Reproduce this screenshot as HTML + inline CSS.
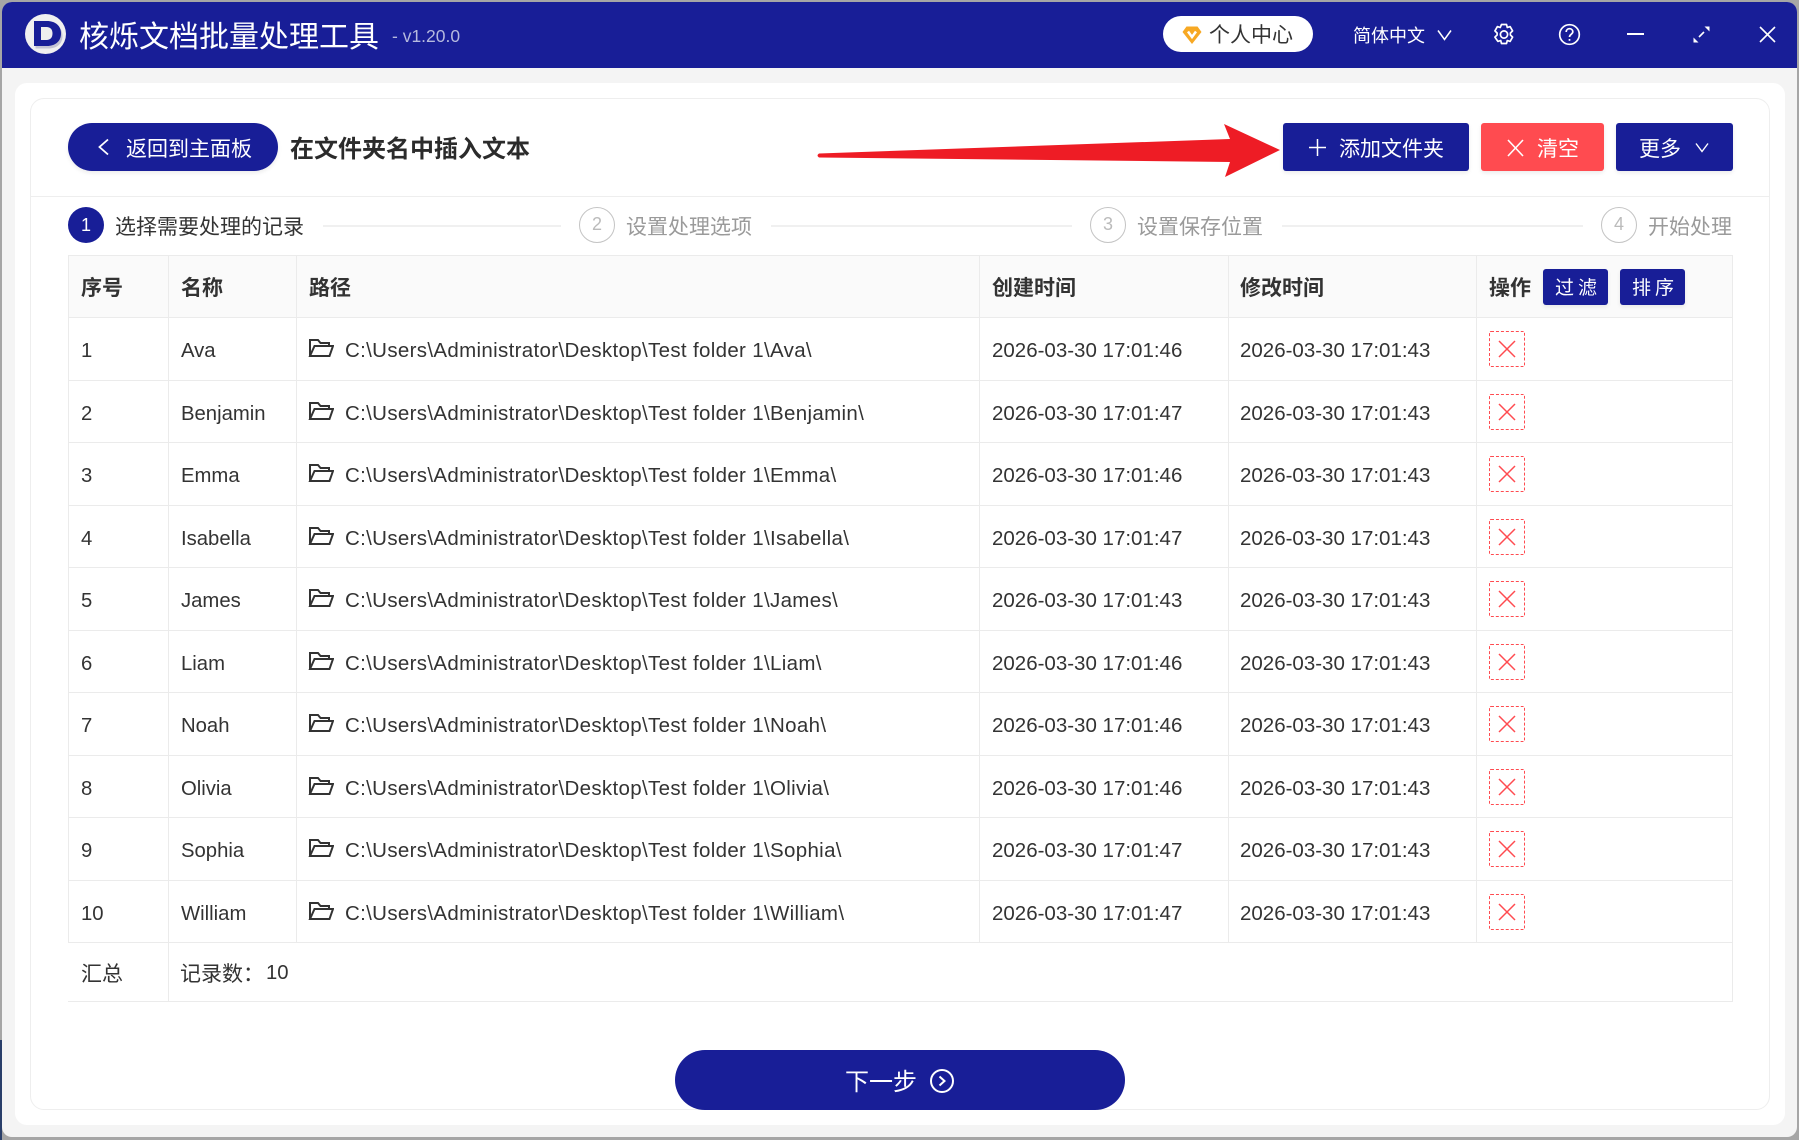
<!DOCTYPE html>
<html lang="zh"><head><meta charset="utf-8"><title>核烁文档批量处理工具</title>
<style>
html,body{margin:0;padding:0;width:1799px;height:1140px;overflow:hidden;background:#a6a6a6}
body{position:relative;font-family:"Liberation Sans","Noto Sans CJK SC",sans-serif;color:#333}
div,span,svg{position:absolute;box-sizing:border-box}
.t{white-space:nowrap;line-height:30px;height:30px;font-size:21px}
.c{font-family:"Noto Sans CJK SC","Liberation Sans",sans-serif}
.b{font-weight:700}
.w{color:#fff}
.g{color:#9a9a9a}
.p{font-size:20.5px;letter-spacing:.33px;margin:2px 0 0 1px}
.d{font-size:20.5px;margin-top:2px}
.n{font-size:20.3px;margin-top:2px}
.btn{background:#181e97;border-radius:3px;box-shadow:0 2px 4px rgba(0,0,0,.08)}
.h{left:68px;width:1665px;height:1px;background:#ebebeb}
.v{width:1px;background:#ebebeb}
.x{left:1489px;width:36px;height:36px;border:1px dashed #ff4b50;border-radius:2px}
.st{width:36px;height:36px;border:1.5px solid #c4c4c4;border-radius:50%;top:207px;text-align:center;line-height:33px;font-size:18px;color:#bbb}
.ln{height:2px;top:225px;background:#f0f0f0}
</style></head><body>
<div style="left:0;top:1040px;width:2px;height:100px;background:#2a3f6a"></div>
<div style="left:2px;top:2px;width:1795px;height:1135px;background:#f4f4f4;border-radius:10px;overflow:hidden">
  <div style="left:0;top:0;width:1795px;height:66px;background:#181e97"></div>
</div>

<!-- logo -->
<div style="left:25px;top:14px;width:41px;height:40px;border-radius:50%;background:#f0f0f0"></div>
<svg style="left:25px;top:14px" width="41" height="40" viewBox="0 0 41 40"><path d="M9 8h13c8 0 14 4.500 14 12.500S30 33 22 33H9z" fill="#c4c4d4" transform="translate(1.500,1.500)"/><path d="M9 7h13c8 0 14 4.500 14 12.500S30 32 22 32H9z" fill="#181e97"/><path d="M16 13h5.500c3.800 0 6 2.500 6 6.500s-2.200 6.500-6 6.500H16z" fill="#eee"/></svg>
<div class="t c w" style="left:79px;top:19px;font-size:30px;line-height:30px">核烁文档批量处理工具</div>
<div class="t" style="left:392px;top:21px;font-size:17.5px;color:#b6bade">- v1.20.0</div>

<!-- top right -->
<div style="left:1163px;top:16px;width:150px;height:36px;border-radius:18px;background:#fff"></div>
<svg style="left:1182px;top:25px" width="20" height="20" viewBox="0 0 20 20"><path d="M4.500 1.500h11L19.500 7 10 19 .5 7z" fill="#f7a823"/><path d="M6 6.500l4 5.500 4-5.500" fill="none" stroke="#fff" stroke-width="2.500"/></svg>
<div class="t c" style="left:1209px;top:19px">个人中心</div>
<div class="t c w" style="left:1353px;top:20px;font-size:18px">简体中文</div>
<svg style="left:1437px;top:29px" width="15" height="12" viewBox="0 0 15 12"><path d="M1 1.500l6.500 9 6.500-9" fill="none" stroke="#fff" stroke-width="1.500"/></svg>
<svg style="left:1493px;top:23px" width="22" height="23" viewBox="0 0 22 23" fill="none" stroke="#fff" stroke-width="1.700" stroke-linejoin="round"><path d="M8.500 1.500h5l.8 3 2.800-.9 2.500 4.300-2.200 2.100v2l2.200 2.100-2.500 4.300-2.800-.9-.8 3h-5l-.8-3-2.800.9L1.900 14.100 4.100 12v-2L1.900 7.900l2.500-4.300 2.800.9z"/><circle cx="11" cy="11.500" r="3.600"/></svg>
<svg style="left:1558px;top:23px" width="23" height="23" viewBox="0 0 23 23" fill="none" stroke="#fff" stroke-width="1.700"><circle cx="11.500" cy="11.500" r="9.800"/><path d="M8.200 9c0-2 1.500-3.300 3.300-3.300s3.300 1.300 3.300 3.100c0 2.500-3.300 2.600-3.300 5.200"/><path d="M11.500 16v1.800"/></svg>
<div style="left:1627px;top:33px;width:17px;height:2px;background:#fff"></div>
<svg style="left:1692px;top:25px" width="19" height="19" viewBox="0 0 19 19" fill="none" stroke="#fff" stroke-width="1.600"><path d="M12 7L7 12"/><path d="M12.500 1.500h5v5z" fill="#fff" stroke="none"/><path d="M1.500 12.500v5h5z" fill="#fff" stroke="none"/></svg>
<svg style="left:1759px;top:26px" width="17" height="17" viewBox="0 0 17 17"><path d="M1 1l15 15M16 1L1 16" stroke="#fff" stroke-width="1.600"/></svg>

<!-- panel -->
<div style="left:15px;top:83px;width:1770px;height:1042px;background:#fff;border-radius:12px"></div>
<div style="left:30px;top:98px;width:1740px;height:1012px;background:#fff;border:1px solid #eee;border-radius:14px"></div>
<div style="left:31px;top:196px;width:1738px;height:1px;background:#eee"></div>

<!-- toolbar -->
<div class="btn" style="left:68px;top:123px;width:210px;height:48px;border-radius:24px"></div>
<svg style="left:97px;top:138px" width="13" height="18" viewBox="0 0 13 18"><path d="M11 1.500L2.500 9l8.500 7.500" fill="none" stroke="#fff" stroke-width="1.800"/></svg>
<div class="t c w" style="left:126px;top:133px">返回到主面板</div>
<div class="t c b" style="left:290px;top:132px;font-size:24px;color:#2b2b2b">在文件夹名中插入文本</div>

<svg style="left:800px;top:110px" width="490" height="75" viewBox="0 0 490 75"><path d="M19 43.500L430 29 424 14 480 40 425 67 430 52 19 47.500Q16 45.500 19 43.500z" fill="#ee1c25"/></svg>

<div class="btn" style="left:1283px;top:123px;width:186px;height:48px"></div>
<svg style="left:1308px;top:138px" width="19" height="19" viewBox="0 0 19 19"><path d="M9.500 1v17M1 9.500h17" stroke="#fff" stroke-width="1.500"/></svg>
<div class="t c w" style="left:1339px;top:133px">添加文件夹</div>
<div class="btn" style="left:1481px;top:123px;width:123px;height:48px;background:#ff4b50"></div>
<svg style="left:1506px;top:139px" width="19" height="18" viewBox="0 0 19 18"><path d="M2 1l15 16M17 1L2 17" stroke="#fff" stroke-width="1.600"/></svg>
<div class="t c w" style="left:1537px;top:133px">清空</div>
<div class="btn" style="left:1616px;top:123px;width:117px;height:48px"></div>
<div class="t c w" style="left:1639px;top:133px">更多</div>
<svg style="left:1695px;top:142px" width="14" height="11" viewBox="0 0 14 11"><path d="M1 1.500l6 8 6-8" fill="none" stroke="#fff" stroke-width="1.400"/></svg>

<!-- steps -->
<div style="left:68px;top:207px;width:36px;height:36px;border-radius:50%;background:#181e97;color:#fff;text-align:center;line-height:36px;font-size:18px">1</div>
<div class="t c" style="left:115px;top:211px">选择需要处理的记录</div>
<div class="ln" style="left:323px;width:238px"></div>
<div class="st" style="left:579px">2</div>
<div class="t c g" style="left:626px;top:211px">设置处理选项</div>
<div class="ln" style="left:771px;width:301px"></div>
<div class="st" style="left:1090px">3</div>
<div class="t c g" style="left:1137px;top:211px">设置保存位置</div>
<div class="ln" style="left:1282px;width:301px"></div>
<div class="st" style="left:1601px">4</div>
<div class="t c g" style="left:1648px;top:211px">开始处理</div>

<!-- table -->
<div style="left:68px;top:255px;width:1665px;height:62px;background:#fafafa"></div>
<div class="h" style="top:255px"></div>
<div class="h" style="top:317px"></div>
<div class="h" style="top:380px"></div>
<div class="h" style="top:442px"></div>
<div class="h" style="top:505px"></div>
<div class="h" style="top:567px"></div>
<div class="h" style="top:630px"></div>
<div class="h" style="top:692px"></div>
<div class="h" style="top:755px"></div>
<div class="h" style="top:817px"></div>
<div class="h" style="top:880px"></div>
<div class="h" style="top:942px"></div>
<div class="h" style="top:1001px"></div>
<div class="v" style="left:68px;top:255px;height:687px"></div>
<div class="v" style="left:168px;top:255px;height:746px"></div>
<div class="v" style="left:296px;top:255px;height:687px"></div>
<div class="v" style="left:979px;top:255px;height:687px"></div>
<div class="v" style="left:1228px;top:255px;height:687px"></div>
<div class="v" style="left:1476px;top:255px;height:687px"></div>
<div class="v" style="left:1732px;top:255px;height:746px"></div>

<div class="t c b" style="left:81px;top:272px">序号</div>
<div class="t c b" style="left:181px;top:272px">名称</div>
<div class="t c b" style="left:309px;top:272px">路径</div>
<div class="t c b" style="left:992px;top:272px">创建时间</div>
<div class="t c b" style="left:1240px;top:272px">修改时间</div>
<div class="t c b" style="left:1489px;top:272px">操作</div>
<div class="btn" style="left:1543px;top:269px;width:65px;height:36px"></div>
<div class="t c w" style="left:1555px;top:272px;font-size:19px;letter-spacing:4px">过滤</div>
<div class="btn" style="left:1620px;top:269px;width:65px;height:36px"></div>
<div class="t c w" style="left:1632px;top:272px;font-size:19px;letter-spacing:4px">排序</div>

<!-- rows -->
<div class="t n" style="left:81px;top:334px">1</div><div class="t n" style="left:181px;top:334px">Ava</div><svg style="left:308px;top:338px" width="26" height="20" viewBox="0 0 26 20"><path d="M2 18V2h8l2.500 3H21v3M2 18h19.500L25 8H6.500z" fill="none" stroke="#333" stroke-width="2"/></svg><div class="t p" style="left:344px;top:334px">C:\Users\Administrator\Desktop\Test folder 1\Ava\</div><div class="t d" style="left:992px;top:334px">2026-03-30 17:01:46</div><div class="t d" style="left:1240px;top:334px">2026-03-30 17:01:43</div><div class="x" style="top:331px"></div><svg style="left:1498px;top:340px" width="18" height="18" viewBox="0 0 18 18"><path d="M1 1l16 16M17 1L1 17" stroke="#ff4b50" stroke-width="1.500"/></svg>

<div class="t n" style="left:81px;top:397px">2</div><div class="t n" style="left:181px;top:397px">Benjamin</div><svg style="left:308px;top:401px" width="26" height="20" viewBox="0 0 26 20"><path d="M2 18V2h8l2.500 3H21v3M2 18h19.500L25 8H6.500z" fill="none" stroke="#333" stroke-width="2"/></svg><div class="t p" style="left:344px;top:397px">C:\Users\Administrator\Desktop\Test folder 1\Benjamin\</div><div class="t d" style="left:992px;top:397px">2026-03-30 17:01:47</div><div class="t d" style="left:1240px;top:397px">2026-03-30 17:01:43</div><div class="x" style="top:394px"></div><svg style="left:1498px;top:403px" width="18" height="18" viewBox="0 0 18 18"><path d="M1 1l16 16M17 1L1 17" stroke="#ff4b50" stroke-width="1.500"/></svg>

<div class="t n" style="left:81px;top:459px">3</div><div class="t n" style="left:181px;top:459px">Emma</div><svg style="left:308px;top:463px" width="26" height="20" viewBox="0 0 26 20"><path d="M2 18V2h8l2.500 3H21v3M2 18h19.500L25 8H6.500z" fill="none" stroke="#333" stroke-width="2"/></svg><div class="t p" style="left:344px;top:459px">C:\Users\Administrator\Desktop\Test folder 1\Emma\</div><div class="t d" style="left:992px;top:459px">2026-03-30 17:01:46</div><div class="t d" style="left:1240px;top:459px">2026-03-30 17:01:43</div><div class="x" style="top:456px"></div><svg style="left:1498px;top:465px" width="18" height="18" viewBox="0 0 18 18"><path d="M1 1l16 16M17 1L1 17" stroke="#ff4b50" stroke-width="1.500"/></svg>

<div class="t n" style="left:81px;top:522px">4</div><div class="t n" style="left:181px;top:522px">Isabella</div><svg style="left:308px;top:526px" width="26" height="20" viewBox="0 0 26 20"><path d="M2 18V2h8l2.500 3H21v3M2 18h19.500L25 8H6.500z" fill="none" stroke="#333" stroke-width="2"/></svg><div class="t p" style="left:344px;top:522px">C:\Users\Administrator\Desktop\Test folder 1\Isabella\</div><div class="t d" style="left:992px;top:522px">2026-03-30 17:01:47</div><div class="t d" style="left:1240px;top:522px">2026-03-30 17:01:43</div><div class="x" style="top:519px"></div><svg style="left:1498px;top:528px" width="18" height="18" viewBox="0 0 18 18"><path d="M1 1l16 16M17 1L1 17" stroke="#ff4b50" stroke-width="1.500"/></svg>

<div class="t n" style="left:81px;top:584px">5</div><div class="t n" style="left:181px;top:584px">James</div><svg style="left:308px;top:588px" width="26" height="20" viewBox="0 0 26 20"><path d="M2 18V2h8l2.500 3H21v3M2 18h19.500L25 8H6.500z" fill="none" stroke="#333" stroke-width="2"/></svg><div class="t p" style="left:344px;top:584px">C:\Users\Administrator\Desktop\Test folder 1\James\</div><div class="t d" style="left:992px;top:584px">2026-03-30 17:01:43</div><div class="t d" style="left:1240px;top:584px">2026-03-30 17:01:43</div><div class="x" style="top:581px"></div><svg style="left:1498px;top:590px" width="18" height="18" viewBox="0 0 18 18"><path d="M1 1l16 16M17 1L1 17" stroke="#ff4b50" stroke-width="1.500"/></svg>

<div class="t n" style="left:81px;top:647px">6</div><div class="t n" style="left:181px;top:647px">Liam</div><svg style="left:308px;top:651px" width="26" height="20" viewBox="0 0 26 20"><path d="M2 18V2h8l2.500 3H21v3M2 18h19.500L25 8H6.500z" fill="none" stroke="#333" stroke-width="2"/></svg><div class="t p" style="left:344px;top:647px">C:\Users\Administrator\Desktop\Test folder 1\Liam\</div><div class="t d" style="left:992px;top:647px">2026-03-30 17:01:46</div><div class="t d" style="left:1240px;top:647px">2026-03-30 17:01:43</div><div class="x" style="top:644px"></div><svg style="left:1498px;top:653px" width="18" height="18" viewBox="0 0 18 18"><path d="M1 1l16 16M17 1L1 17" stroke="#ff4b50" stroke-width="1.500"/></svg>

<div class="t n" style="left:81px;top:709px">7</div><div class="t n" style="left:181px;top:709px">Noah</div><svg style="left:308px;top:713px" width="26" height="20" viewBox="0 0 26 20"><path d="M2 18V2h8l2.500 3H21v3M2 18h19.500L25 8H6.500z" fill="none" stroke="#333" stroke-width="2"/></svg><div class="t p" style="left:344px;top:709px">C:\Users\Administrator\Desktop\Test folder 1\Noah\</div><div class="t d" style="left:992px;top:709px">2026-03-30 17:01:46</div><div class="t d" style="left:1240px;top:709px">2026-03-30 17:01:43</div><div class="x" style="top:706px"></div><svg style="left:1498px;top:715px" width="18" height="18" viewBox="0 0 18 18"><path d="M1 1l16 16M17 1L1 17" stroke="#ff4b50" stroke-width="1.500"/></svg>

<div class="t n" style="left:81px;top:772px">8</div><div class="t n" style="left:181px;top:772px">Olivia</div><svg style="left:308px;top:776px" width="26" height="20" viewBox="0 0 26 20"><path d="M2 18V2h8l2.500 3H21v3M2 18h19.500L25 8H6.500z" fill="none" stroke="#333" stroke-width="2"/></svg><div class="t p" style="left:344px;top:772px">C:\Users\Administrator\Desktop\Test folder 1\Olivia\</div><div class="t d" style="left:992px;top:772px">2026-03-30 17:01:46</div><div class="t d" style="left:1240px;top:772px">2026-03-30 17:01:43</div><div class="x" style="top:769px"></div><svg style="left:1498px;top:778px" width="18" height="18" viewBox="0 0 18 18"><path d="M1 1l16 16M17 1L1 17" stroke="#ff4b50" stroke-width="1.500"/></svg>

<div class="t n" style="left:81px;top:834px">9</div><div class="t n" style="left:181px;top:834px">Sophia</div><svg style="left:308px;top:838px" width="26" height="20" viewBox="0 0 26 20"><path d="M2 18V2h8l2.500 3H21v3M2 18h19.500L25 8H6.500z" fill="none" stroke="#333" stroke-width="2"/></svg><div class="t p" style="left:344px;top:834px">C:\Users\Administrator\Desktop\Test folder 1\Sophia\</div><div class="t d" style="left:992px;top:834px">2026-03-30 17:01:47</div><div class="t d" style="left:1240px;top:834px">2026-03-30 17:01:43</div><div class="x" style="top:831px"></div><svg style="left:1498px;top:840px" width="18" height="18" viewBox="0 0 18 18"><path d="M1 1l16 16M17 1L1 17" stroke="#ff4b50" stroke-width="1.500"/></svg>

<div class="t n" style="left:81px;top:897px">10</div><div class="t n" style="left:181px;top:897px">William</div><svg style="left:308px;top:901px" width="26" height="20" viewBox="0 0 26 20"><path d="M2 18V2h8l2.500 3H21v3M2 18h19.500L25 8H6.500z" fill="none" stroke="#333" stroke-width="2"/></svg><div class="t p" style="left:344px;top:897px">C:\Users\Administrator\Desktop\Test folder 1\William\</div><div class="t d" style="left:992px;top:897px">2026-03-30 17:01:47</div><div class="t d" style="left:1240px;top:897px">2026-03-30 17:01:43</div><div class="x" style="top:894px"></div><svg style="left:1498px;top:903px" width="18" height="18" viewBox="0 0 18 18"><path d="M1 1l16 16M17 1L1 17" stroke="#ff4b50" stroke-width="1.500"/></svg>

<div class="t c" style="left:81px;top:958px">汇总</div>
<div class="t c" style="left:180px;top:958px">记录数：</div>
<div class="t n" style="left:266px;top:956px">10</div>

<!-- next -->
<div style="left:675px;top:1050px;width:450px;height:60px;border-radius:30px;background:#181e97"></div>
<div class="t c w" style="left:845px;top:1065px;font-size:24px">下一步</div>
<svg style="left:929px;top:1068px" width="26" height="26" viewBox="0 0 26 26" fill="none" stroke="#fff" stroke-width="2"><circle cx="13" cy="13" r="11"/><path d="M10.500 8.500l5 4.500-5 4.500"/></svg>
</body></html>
